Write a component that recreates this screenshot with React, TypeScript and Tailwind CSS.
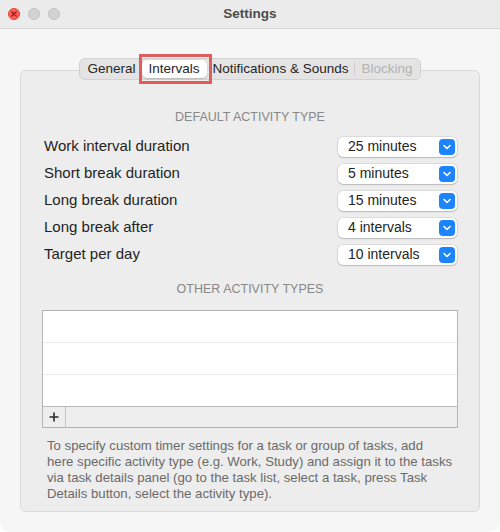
const ROWS = [
  { label: "Work interval duration", value: "25 minutes" },
  { label: "Short break duration", value: "5 minutes" },
  { label: "Long break duration", value: "15 minutes" },
  { label: "Long break after", value: "4 intervals" },
  { label: "Target per day", value: "10 intervals" },
];

const HINT = [
  "To specify custom timer settings for a task or group of tasks, add",
  "here specific activity type (e.g. Work, Study) and assign it to the tasks",
  "via task details panel (go to the task list, select a task, press Task",
  "Details button, select the activity type).",
];

function Popup({ value }: { value: string }) {
  return (
    <div className="flex h-[20px] w-[119px] items-center justify-between rounded-[5px] bg-white pl-[10px] pr-[2px] shadow-[0_0_0_0.5px_rgba(0,0,0,0.14),0_1px_1.5px_rgba(0,0,0,0.16)]">
      <span className="text-[14px] text-[#242424]">{value}</span>
      <span className="flex h-[16px] w-[16px] items-center justify-center rounded-[4px] bg-[#1c84fc]">
        <svg width="8" height="6" viewBox="0 0 8 6" fill="none">
          <path d="M1 1.5 L4 4.5 L7 1.5" stroke="white" strokeWidth="1.6" strokeLinecap="round" strokeLinejoin="round" />
        </svg>
      </span>
    </div>
  );
}

export default function App() {
  return (
    <div className="h-[532px] w-[500px] bg-white font-['Liberation_Sans',Arial,sans-serif]">
      <div className="flex h-full flex-col overflow-hidden rounded-b-[10px] bg-[#f6f6f6]">
        {/* title bar */}
        <div className="relative flex h-[29px] items-center justify-center border-b border-[#d6d6d6] bg-[#ebebeb]">
          <div className="absolute left-[8px] top-[8px] flex gap-[8px]">
            <span className="flex h-[12px] w-[12px] items-center justify-center rounded-full border-[0.5px] border-[#e0443e] bg-[#fe5f57]">
              <svg width="6" height="6" viewBox="0 0 6 6">
                <path d="M0.8 0.8 L5.2 5.2 M5.2 0.8 L0.8 5.2" stroke="#7a0d08" strokeWidth="1.2" strokeLinecap="round" />
              </svg>
            </span>
            <span className="h-[12px] w-[12px] rounded-full border-[0.5px] border-[#c2c2c2] bg-[#d3d3d3]" />
            <span className="h-[12px] w-[12px] rounded-full border-[0.5px] border-[#c2c2c2] bg-[#d3d3d3]" />
          </div>
          <span className="text-[13.5px] font-bold text-[#4b4b4b]">Settings</span>
        </div>

        <div className="flex flex-1 flex-col px-[20px] pb-[20px] pt-[29px]">
          {/* tabs */}
          <div className="relative z-10 flex justify-center">
            <div className="flex h-[22px] items-center rounded-[6px] border-[0.5px] border-[#d2d2d2] bg-[#e4e4e4] px-[2px] text-[13.5px] text-[#262626]">
              <span className="px-[6px]">General</span>
              <span className="relative flex h-[18px] items-center rounded-[5px] bg-white px-[7px] shadow-[0_0.5px_1.5px_rgba(0,0,0,0.2)]">
                Intervals
                <span className="absolute -bottom-[6px] -left-[3px] -right-[5px] -top-[6px] border-[3px] border-[#e35b5b]" />
              </span>
              <span className="px-[6px]">Notifications &amp; Sounds</span>
              <span className="h-[14px] w-px bg-[#cdcdcd]" />
              <span className="px-[6px] text-[#b3b3b3]">Blocking</span>
            </div>
          </div>

          {/* panel */}
          <div className="-mt-[10px] flex flex-1 flex-col rounded-[6px] border border-[#d9d9d9] bg-[#ededed] px-[21px] pt-[38px]">
            <div className="text-center text-[12.5px] leading-[16px] text-[#888888]">DEFAULT ACTIVITY TYPE</div>
            <div className="mt-[8px] flex flex-col">
              {ROWS.map((row) => (
                <div key={row.label} className="flex h-[27px] items-center justify-between pl-[2px] pr-[1px]">
                  <span className="text-[15px] text-[#1f1f1f]">{row.label}</span>
                  <Popup value={row.value} />
                </div>
              ))}
            </div>
            <div className="mt-[13px] text-center text-[12.5px] leading-[16px] text-[#888888]">OTHER ACTIVITY TYPES</div>

            {/* table */}
            <div className="mt-[13px] flex flex-col border border-[#b4b4b4]">
              <div className="h-[31px] bg-white" />
              <div className="h-[32px] border-t border-[#ececec] bg-white" />
              <div className="h-[32px] border-t border-[#ececec] bg-white" />
              <div className="flex h-[21px] border-t border-[#b9b9b9] bg-[#eeeeee]">
                <div className="flex w-[23px] items-center justify-center border-r border-[#c4c4c4]">
                  <svg width="10" height="10" viewBox="0 0 10 10">
                    <path d="M5 0.5 V9.5 M0.5 5 H9.5" stroke="#2a2a2a" strokeWidth="1.6" />
                  </svg>
                </div>
              </div>
            </div>

            <div className="mt-[10px] pl-[5px] text-[13.2px] leading-[16px] text-[#6a6a6a]">
              {HINT.map((line) => (
                <div key={line} className="whitespace-nowrap">{line}</div>
              ))}
            </div>
          </div>
        </div>
      </div>
    </div>
  );
}
